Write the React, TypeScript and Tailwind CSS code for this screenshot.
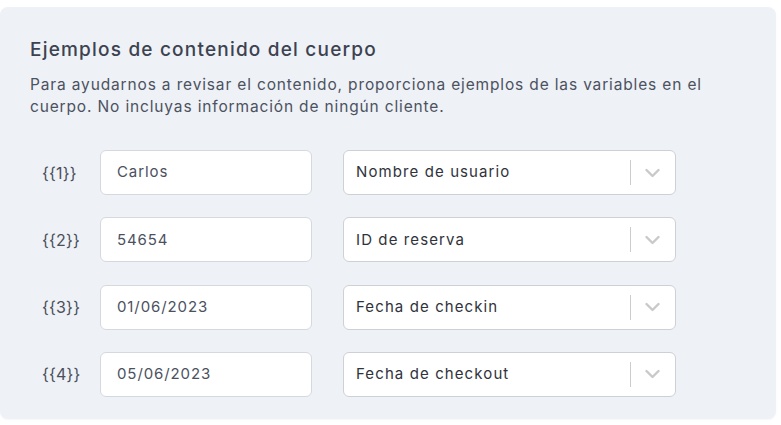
import React from "react";

const rows = [
  { key: "{{1}}", value: "Carlos", field: "Nombre de usuario" },
  { key: "{{2}}", value: "54654", field: "ID de reserva" },
  { key: "{{3}}", value: "01/06/2023", field: "Fecha de checkin" },
  { key: "{{4}}", value: "05/06/2023", field: "Fecha de checkout" },
];

const Chevron = () => (
  <svg width="15" height="10" viewBox="0 0 15 10" fill="none">
    <path d="M1.5 2 L7.5 8 L13.5 2" stroke="#c9c9c9" strokeWidth="2.4" strokeLinecap="round" strokeLinejoin="round" />
  </svg>
);

const App = () => {
  return (
    <div className="h-[425px] bg-white pt-[7px] font-['Inter',sans-serif]">
      <div className="w-[776px] h-[412px] rounded-lg bg-[#eef1f6] shadow-[0_1px_2px_rgba(0,0,0,0.04)] px-[30px] pt-[31px]">
        <h2 className="text-[19px] leading-[24px] font-medium tracking-[1.2px] text-[#3c4250]">
          Ejemplos de contenido del cuerpo
        </h2>
        <p className="mt-[12px] text-[15.5px] leading-[22px] tracking-[0.85px] text-[#4c5260] w-[710px]">
          Para ayudarnos a revisar el contenido, proporciona ejemplos de las
          variables en el cuerpo. No incluyas información de ningún cliente.
        </p>
        <div className="mt-[32px] flex flex-col gap-[22.3px]">
          {rows.map((r) => (
            <div key={r.key} className="flex items-center">
              <span className="w-[70px] pl-[12px] text-[16px] tracking-[0.2px] text-[#4a4f5a]">
                {r.key}
              </span>
              <div className="w-[212px] h-[45px] flex items-center rounded-md border border-[#d5d8de] bg-white px-[16px] text-[15px] tracking-[0.9px] text-[#4b5160]">
                {r.value}
              </div>
              <div className="ml-[31px] w-[333px] h-[45px] flex items-center rounded-md border border-[#cdd0d5] bg-white">
                <span className="flex-1 pl-[12px] text-[15px] tracking-[1.1px] text-[#30333b]">
                  {r.field}
                </span>
                <span className="w-px h-[25px] bg-[#cccccc]" />
                <span className="pl-[14px] pr-[15px] flex items-center">
                  <Chevron />
                </span>
              </div>
            </div>
          ))}
        </div>
      </div>
    </div>
  );
};

export default App;
